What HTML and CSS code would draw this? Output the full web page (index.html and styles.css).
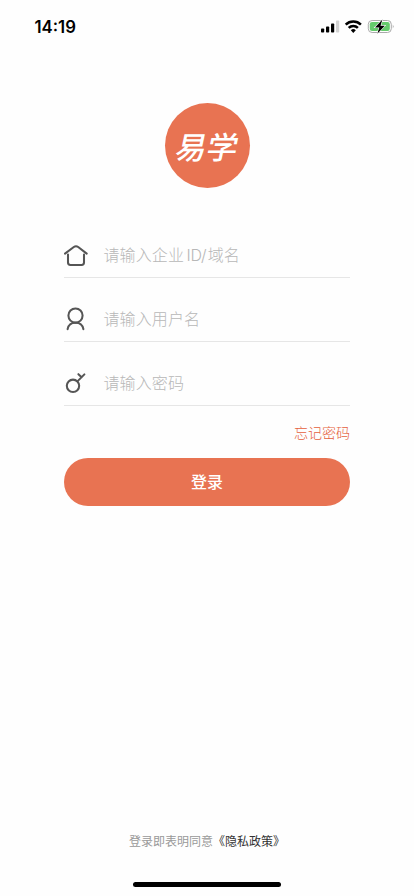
FILE: index.html
```html
<!DOCTYPE html>
<html lang="zh-CN">
<head>
<meta charset="utf-8">
<meta name="viewport" content="width=device-width, initial-scale=1">
<title>登录</title>
<link rel="stylesheet" href="styles.css">
</head>
<body>
<div class="screen">
  <header class="status">
    <span class="time">14:19</span>
    <svg class="indicators" width="76" height="16" viewBox="0 0 76 16">
      <rect x="1" y="9.5" width="3.2" height="4" rx=".8"/>
      <rect x="6" y="7.5" width="3.2" height="6" rx=".8"/>
      <rect x="11" y="4.5" width="3.2" height="9" rx=".8"/>
      <rect x="16" y="1.5" width="3.2" height="12" rx=".8" fill="#d2d2d2"/>
      <g fill="none" stroke="#000" stroke-width="2.5">
        <path d="M25.7 5.6a10.8 10.8 0 0 1 15.2 0"/>
        <path d="M28.7 8.8a6.5 6.5 0 0 1 9.2 0"/>
      </g>
      <path d="M33.3 13.9l-2.5-2.6a3.6 3.6 0 0 1 5 0z"/>
      <rect x="48.3" y="1.5" width="23" height="12" rx="3.8" fill="none" stroke="#aaa"/>
      <rect x="49.8" y="3" width="20" height="9" rx="2.3" fill="#65cb6c"/>
      <path d="M72.8 5.6q1.7 1.9 0 3.8z" fill="#999"/>
      <path d="M62.4.6l-7.4 7.9h4.3l-2 6.2 7.5-8h-4.3z" stroke="#fff" stroke-width="1.2" paint-order="stroke"/>
    </svg>
  </header>
  <main class="content">
    <div class="logo"><span class="logo-text">易学</span></div>
    <form class="form">
      <label class="field">
        <svg class="icon" width="24" height="24" viewBox="0 0 24 24">
          <path d="M1 10.6L9.8 4Q12 2.4 14.2 4L22.7 10.6M4 11.6v7.9q0 2.4 2.4 2.4h11.2q2.4 0 2.4-2.4v-7.9"/>
        </svg>
        <span class="placeholder placeholder-company">请输入企业<span class="latin">ID/</span>域名</span>
      </label>
      <label class="field">
        <svg class="icon" width="24" height="24" viewBox="0 0 24 24">
          <circle cx="11.5" cy="8.6" r="7.1"/>
          <path d="M3.6 22.2c.5-4 3.8-6.6 7.9-6.6s7.4 2.6 7.9 6.6"/>
        </svg>
        <span class="placeholder">请输入用户名</span>
      </label>
      <label class="field">
        <svg class="icon" width="24" height="24" viewBox="0 0 24 24">
          <circle cx="9" cy="14.8" r="6.2"/>
          <path d="M13.4 10.4L20.4 3.4M14.4 3.2l3.2 3"/>
        </svg>
        <span class="placeholder">请输入密码</span>
      </label>
      <a class="forgot">忘记密码</a>
      <button class="submit" type="button">登录</button>
    </form>
  </main>
  <footer class="footer">
    <p class="terms">登录即表明同意<span class="policy">《隐私政策》</span></p>
    <div class="home-bar"></div>
  </footer>
</div>
</body>
</html>
```

FILE: styles.css
```css
* { box-sizing: border-box; }
body {
  margin: 0;
  background: #fefefe;
  font-family: "Noto Sans CJK SC", sans-serif;
}
.screen {
  width: 414px;
  height: 896px;
  display: flex;
  flex-direction: column;
}
.status {
  height: 103px;
  padding: 16px 18px 0 34.5px;
  display: flex;
  justify-content: space-between;
  align-items: flex-start;
}
.time {
  font: 600 16.8px/22px Inter, sans-serif;
  color: #000;
}
.indicators { margin-top: 3px; }
.content {
  flex: 1;
  padding: 0 64px;
  display: flex;
  flex-direction: column;
  align-items: center;
}
.logo {
  width: 85px;
  height: 85px;
  border-radius: 50%;
  background: #e87352;
  display: flex;
  align-items: center;
  justify-content: center;
}
.logo-text {
  color: #fff;
  font-size: 31px;
  line-height: 40px;
  font-weight: 500;
  white-space: nowrap;
  transform: translate(.5px, -.5px) skewX(-12deg);
}
.form {
  width: 286px;
  margin-top: 26.6px;
  display: flex;
  flex-direction: column;
}
.field {
  height: 63.67px;
  padding-bottom: 10px;
  border-bottom: 1px solid #e6e6e6;
  display: flex;
  align-items: flex-end;
  gap: 15.5px;
}
.icon {
  fill: none;
  stroke: #555;
  stroke-width: 2.05;
  stroke-linecap: round;
  stroke-linejoin: round;
}
.placeholder {
  margin-bottom: 1px;
  color: #b8b8b8;
  font-size: 16px;
  line-height: 24px;
  font-weight: 300;
  letter-spacing: .1px;
  white-space: nowrap;
}
.placeholder-company { margin-bottom: 0; }
.latin {
  font-family: Inter, sans-serif;
  margin: 0 1.5px 0 2.5px;
  letter-spacing: -.3px;
}
.forgot {
  align-self: flex-end;
  margin-top: 15px;
  color: #e55f3c;
  font-size: 14px;
  line-height: 22px;
  font-weight: 300;
}
.submit {
  height: 48px;
  margin-top: 15.4px;
  padding: 0 0 1px;
  border: 0;
  border-radius: 24px;
  background: #e87352;
  color: #fff;
  font: 500 16px/46px "Noto Sans CJK SC", sans-serif;
}
.footer {
  height: 65px;
  display: flex;
  flex-direction: column;
  align-items: center;
}
.terms {
  margin: 0;
  color: #999;
  font-size: 12px;
  line-height: 20px;
}
.policy { color: #333; }
.home-bar {
  width: 148px;
  height: 5px;
  margin-top: 31px;
  border-radius: 3px;
  background: #000;
}
```
